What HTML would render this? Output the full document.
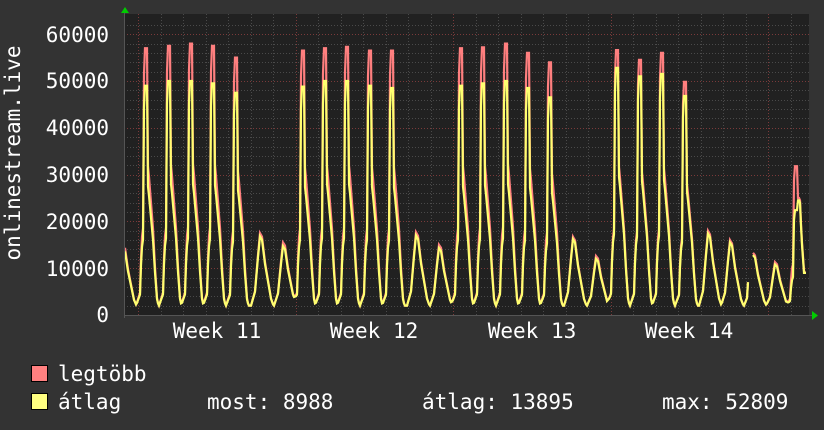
<!DOCTYPE html>
<html><head><meta charset="utf-8"><style>
html,body{margin:0;padding:0;background:#333;}
body{width:824px;height:430px;overflow:hidden;position:relative;font-family:"DejaVu Sans Mono","Liberation Mono",monospace;}
svg{position:absolute;left:0;top:0;}
text{font-family:"DejaVu Sans Mono","Liberation Mono",monospace;font-size:21px;fill:#fff;}
</style></head><body>
<svg id="g" width="824" height="430" xmlns="http://www.w3.org/2000/svg">
<rect x="0" y="0" width="824" height="430" fill="#333"/>
<rect x="124" y="14" width="685" height="301" fill="#212121"/>
<g id="grid"></g>
<g id="data"></g>
<line x1="124" y1="315.5" x2="812" y2="315.5" stroke="#555" stroke-width="1"/>
<line x1="124.5" y1="12" x2="124.5" y2="318" stroke="#555" stroke-width="1"/>
<polygon points="121,13 125,7 129,13" fill="#0c0"/>
<polygon points="812,311 818,315.5 812,320" fill="#0c0"/>
<g text-anchor="end">
<text x="109" y="42">60000</text>
<text x="109" y="88">50000</text>
<text x="109" y="135">40000</text>
<text x="109" y="182">30000</text>
<text x="109" y="229">20000</text>
<text x="109" y="276">10000</text>
<text x="109" y="322">0</text>
</g>
<text transform="translate(20,153) rotate(-90)" text-anchor="middle">onlinestream.live</text>
<g text-anchor="middle">
<text x="217" y="338">Week 11</text>
<text x="374" y="338">Week 12</text>
<text x="532" y="338">Week 13</text>
<text x="689" y="338">Week 14</text>
</g>
<rect x="31.5" y="365.5" width="16" height="16" fill="#ff8080" stroke="#000"/>
<rect x="31.5" y="393.5" width="16" height="16" fill="#ffff80" stroke="#000"/>
<text x="58" y="381">legtöbb</text>
<text x="58" y="409">átlag</text>
<text x="207" y="409">most: 8988</text>
<text x="422" y="409">átlag: 13895</text>
<text x="662" y="409">max: 52809</text>
</svg>
<script>
(function(){
var NS="http://www.w3.org/2000/svg";
var grid=document.getElementById('grid'),data=document.getElementById('data');
function line(x1,y1,x2,y2,c,p){var l=document.createElementNS(NS,'line');l.setAttribute('x1',x1);l.setAttribute('y1',y1);l.setAttribute('x2',x2);l.setAttribute('y2',y2);l.setAttribute('stroke',c);l.setAttribute('stroke-width',1);l.setAttribute('stroke-dasharray','1,2');p.appendChild(l);}
function Y(v){return 315-v*0.00468;}
for(var v=2000;v<=62000;v+=2000){var y=Math.round(Y(v))+0.5;if(y<14)break;line(124,y,809,y,(v%10000==0)?'#7a3a3a':'#4a4a4a',grid);}
for(var x=138;x<809;x+=22.5){var xx=Math.round(x)+0.5;var maj=[138,295.5,453,610.5,768].some(function(m){return Math.abs(m-x)<1;});line(xx,14,xx,315,maj?'#7a3a3a':'#4a4a4a',grid);}
var tall=[[-10,0],[-6,0.05],[-4.5,0.25],[-3,0.3],[-2.5,0.65],[-1.8,1],[1.2,1],[1.8,0.55],[3,0.5],[5,0.4],[7,0.3],[9,0.15],[11,0.03],[12.5,0]];
var small=[[-10,0],[-6,0.2],[-3,0.7],[-1,1],[1,0.95],[4,0.6],[7,0.35],[10,0.1],[12.5,0]];
function f(sh,t){if(t<=sh[0][0]||t>=sh[sh.length-1][0])return 0;for(var i=1;i<sh.length;i++){if(t<=sh[i][0]){var a=sh[i-1],b=sh[i];return a[1]+(b[1]-a[1])*(t-a[0])/(b[0]-a[0]);}}return 0;}
var days=[[124,0,15000,14200],[146,1,57000,49000],[169,1,57500,50000],[191,1,58000,50000],[213,1,57500,49500],[236,1,55000,47500],
[261,0,17500,16800],[284,0,15500,14700],
[303,1,56500,48800],[325,1,57000,50000],[347,1,57300,50000],[370,1,56500,49000],[392,1,56500,48500],
[417,0,17700,17000],[440,0,15000,14300],
[461,1,57000,49000],[483,1,57200,49500],[506,1,58000,50000],[528,1,56000,48500],[550,1,54000,46500],
[574,0,16700,16200],[597,0,12600,12000],
[617,1,56600,52800],[640,1,54500,51000],[662,1,56000,51500],[685,1,49800,46800],
[709,0,18000,17400],[731,0,16000,15500],[754,0,13300,12800],[776,0,11300,10800],
[796,1,31800,22400]];
function val(x,idx){var base=2000,s=base;for(var i=0;i<days.length;i++){var d=days[i];var t=x-d[0];var sh=d[1]?tall:small;s+=(d[idx]-base)*f(sh,t);}return s;}
function path(idx){var d='',pen=false;for(var x=125;x<=806;x+=1){if(x>=749&&x<=752){pen=false;continue;}var v=val(x,idx);if(x==748)v=7000;
if(x>=798){var arr=idx==3?[24500,24500,24000,19000,15000,12000,9000,9000,9000]:[25000,25000,24500,19500,15500,12500,9500,9000,9000];v=arr[x-798];}
d+=(pen?'L':'M')+x+' '+Y(v).toFixed(1);pen=true;}return d;}
function add(d,c){var p=document.createElementNS(NS,'path');p.setAttribute('d',d);p.setAttribute('fill','none');p.setAttribute('stroke',c);p.setAttribute('stroke-width',2.2);data.appendChild(p);}
add(path(2),'#ff7f7f');add(path(3),'#ffff70');
})();
</script>
</body></html>
